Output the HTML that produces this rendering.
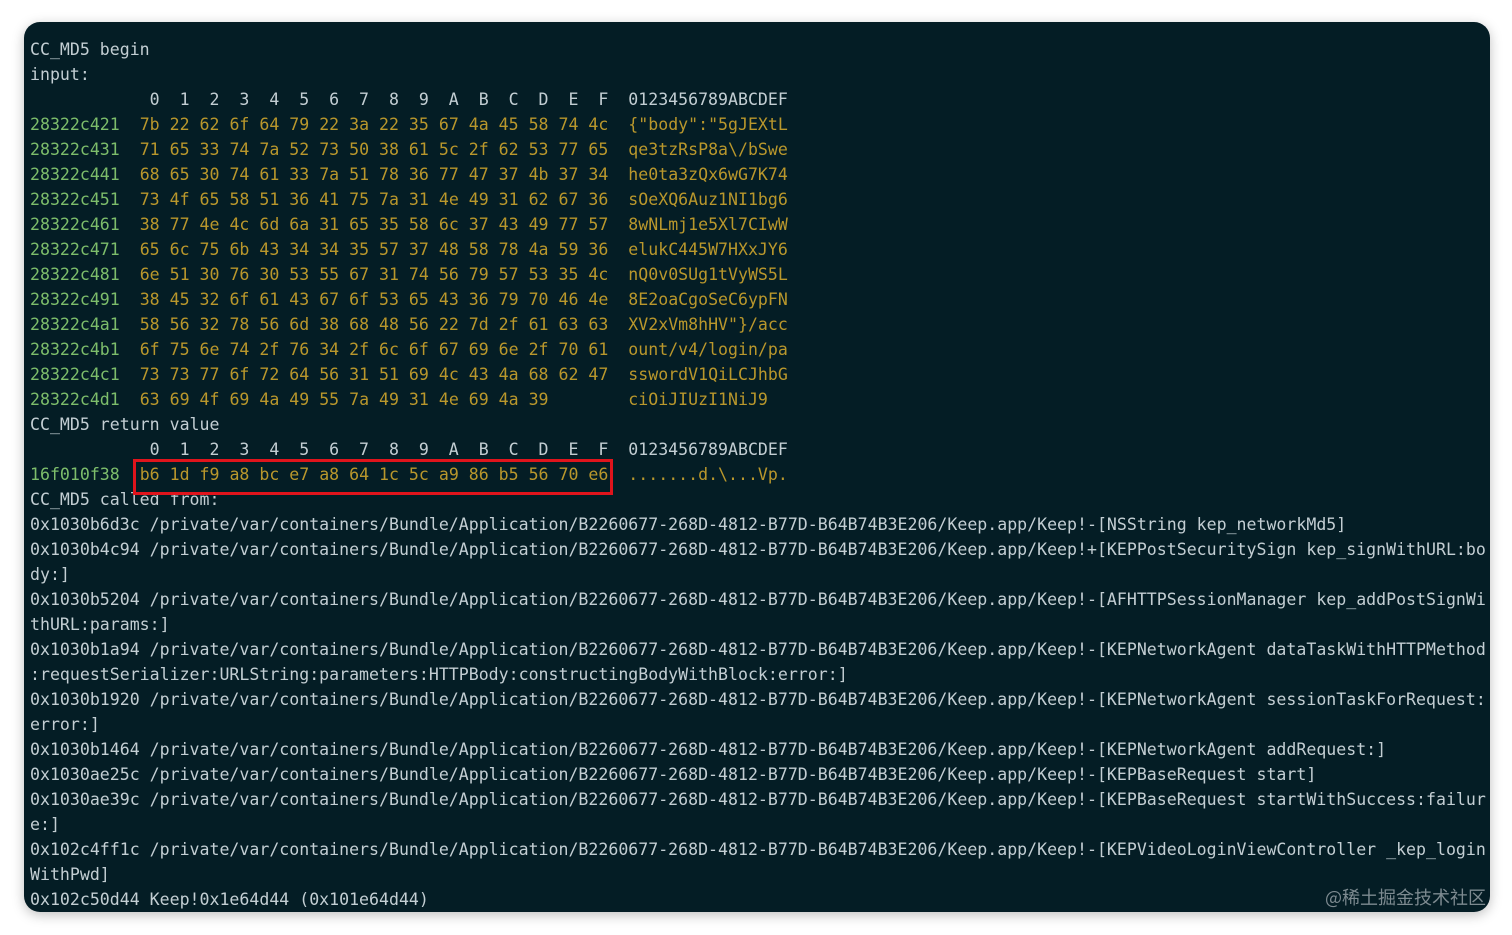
<!DOCTYPE html>
<html><head><meta charset="utf-8"><style>
html,body{margin:0;padding:0;background:#fff;width:1512px;height:935px;overflow:hidden}
.t{position:absolute;left:24px;top:22px;width:1466px;height:890px;background:#041d25;border-radius:16px;box-shadow:0 3px 12px rgba(0,0,0,.25)}
pre{position:absolute;left:6px;top:15px;margin:0;font-family:"DejaVu Sans Mono","Liberation Mono",monospace;font-size:16.57px;line-height:25px;color:#c3ced3;white-space:pre}
.g{color:#7dbd6b}.y{color:#b9972c}
.box{position:absolute;left:109px;top:437px;width:474px;height:30px;border:3px solid #e0141c}
.w{position:absolute;right:4px;bottom:2px;font-family:"Noto Sans CJK SC",sans-serif;font-size:18px;color:#7d8a90}
</style></head><body><div class="t"><pre>CC_MD5 begin
input:
            0  1  2  3  4  5  6  7  8  9  A  B  C  D  E  F  0123456789ABCDEF
<span class="g">28322c421</span>  <span class="y">7b 22 62 6f 64 79 22 3a 22 35 67 4a 45 58 74 4c  {"body":"5gJEXtL</span>
<span class="g">28322c431</span>  <span class="y">71 65 33 74 7a 52 73 50 38 61 5c 2f 62 53 77 65  qe3tzRsP8a\/bSwe</span>
<span class="g">28322c441</span>  <span class="y">68 65 30 74 61 33 7a 51 78 36 77 47 37 4b 37 34  he0ta3zQx6wG7K74</span>
<span class="g">28322c451</span>  <span class="y">73 4f 65 58 51 36 41 75 7a 31 4e 49 31 62 67 36  sOeXQ6Auz1NI1bg6</span>
<span class="g">28322c461</span>  <span class="y">38 77 4e 4c 6d 6a 31 65 35 58 6c 37 43 49 77 57  8wNLmj1e5Xl7CIwW</span>
<span class="g">28322c471</span>  <span class="y">65 6c 75 6b 43 34 34 35 57 37 48 58 78 4a 59 36  elukC445W7HXxJY6</span>
<span class="g">28322c481</span>  <span class="y">6e 51 30 76 30 53 55 67 31 74 56 79 57 53 35 4c  nQ0v0SUg1tVyWS5L</span>
<span class="g">28322c491</span>  <span class="y">38 45 32 6f 61 43 67 6f 53 65 43 36 79 70 46 4e  8E2oaCgoSeC6ypFN</span>
<span class="g">28322c4a1</span>  <span class="y">58 56 32 78 56 6d 38 68 48 56 22 7d 2f 61 63 63  XV2xVm8hHV"}/acc</span>
<span class="g">28322c4b1</span>  <span class="y">6f 75 6e 74 2f 76 34 2f 6c 6f 67 69 6e 2f 70 61  ount/v4/login/pa</span>
<span class="g">28322c4c1</span>  <span class="y">73 73 77 6f 72 64 56 31 51 69 4c 43 4a 68 62 47  sswordV1QiLCJhbG</span>
<span class="g">28322c4d1</span>  <span class="y">63 69 4f 69 4a 49 55 7a 49 31 4e 69 4a 39        ciOiJIUzI1NiJ9</span>
CC_MD5 return value
            0  1  2  3  4  5  6  7  8  9  A  B  C  D  E  F  0123456789ABCDEF
<span class="g">16f010f38</span>  <span class="y">b6 1d f9 a8 bc e7 a8 64 1c 5c a9 86 b5 56 70 e6  .......d.\...Vp.</span>
CC_MD5 called from:
0x1030b6d3c /private/var/containers/Bundle/Application/B2260677-268D-4812-B77D-B64B74B3E206/Keep.app/Keep!-[NSString kep_networkMd5]
0x1030b4c94 /private/var/containers/Bundle/Application/B2260677-268D-4812-B77D-B64B74B3E206/Keep.app/Keep!+[KEPPostSecuritySign kep_signWithURL:bo
dy:]
0x1030b5204 /private/var/containers/Bundle/Application/B2260677-268D-4812-B77D-B64B74B3E206/Keep.app/Keep!-[AFHTTPSessionManager kep_addPostSignWi
thURL:params:]
0x1030b1a94 /private/var/containers/Bundle/Application/B2260677-268D-4812-B77D-B64B74B3E206/Keep.app/Keep!-[KEPNetworkAgent dataTaskWithHTTPMethod
:requestSerializer:URLString:parameters:HTTPBody:constructingBodyWithBlock:error:]
0x1030b1920 /private/var/containers/Bundle/Application/B2260677-268D-4812-B77D-B64B74B3E206/Keep.app/Keep!-[KEPNetworkAgent sessionTaskForRequest:
error:]
0x1030b1464 /private/var/containers/Bundle/Application/B2260677-268D-4812-B77D-B64B74B3E206/Keep.app/Keep!-[KEPNetworkAgent addRequest:]
0x1030ae25c /private/var/containers/Bundle/Application/B2260677-268D-4812-B77D-B64B74B3E206/Keep.app/Keep!-[KEPBaseRequest start]
0x1030ae39c /private/var/containers/Bundle/Application/B2260677-268D-4812-B77D-B64B74B3E206/Keep.app/Keep!-[KEPBaseRequest startWithSuccess:failur
e:]
0x102c4ff1c /private/var/containers/Bundle/Application/B2260677-268D-4812-B77D-B64B74B3E206/Keep.app/Keep!-[KEPVideoLoginViewController _kep_login
WithPwd]
0x102c50d44 Keep!0x1e64d44 (0x101e64d44)</pre>
<div class="box"></div>
<div class="w">@稀土掘金技术社区</div>
</div></body></html>
